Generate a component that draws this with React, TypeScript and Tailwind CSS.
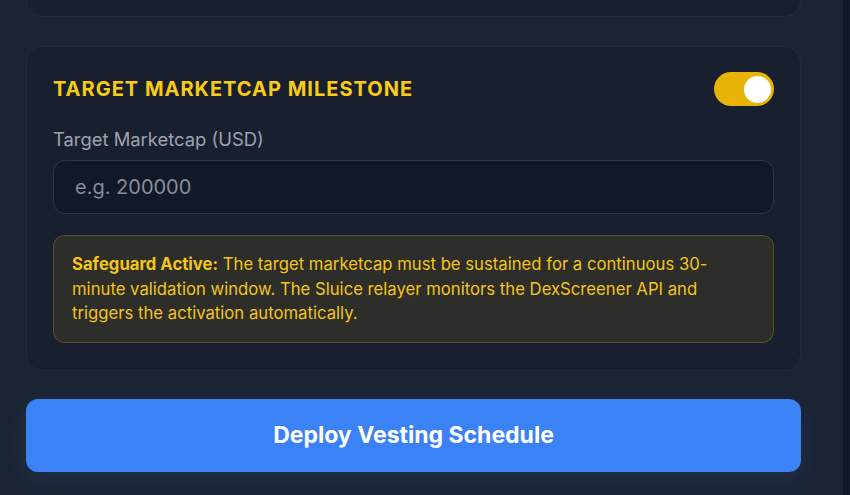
import { useState } from 'react';

export default function App() {
  const [enabled, setEnabled] = useState(true);

  return (
    <div
      className="flex h-[495px] w-[850px] overflow-hidden bg-[#111827]"
      style={{ fontFamily: 'Inter, "Noto Sans", sans-serif' }}
    >
      <div className="flex w-[843px] flex-col bg-[#1c2433] pl-[26px] pr-[42px]">
        {/* Previous card, scrolled mostly out of view */}
        <div className="h-[17px] rounded-b-[16px] border-x border-b border-[#222b3b] bg-[#181f2e]" />

        {/* Target marketcap card */}
        <div className="mt-[29px] rounded-[16px] border border-[#222b3b] bg-[#181f2e] px-[26px] pb-[27px] pt-[25px]">
          <div className="flex items-center justify-between">
            <h2 className="text-[20px] font-bold tracking-[0.05em] text-[#facc15]">
              TARGET MARKETCAP MILESTONE
            </h2>
            <button
              type="button"
              onClick={() => setEnabled(!enabled)}
              className={`flex h-[34px] w-[60px] items-center rounded-full px-[3px] ${
                enabled ? 'justify-end bg-[#eab308]' : 'justify-start bg-[#374151]'
              }`}
            >
              <span className="h-[27px] w-[27px] rounded-full bg-white" />
            </button>
          </div>

          <label className="mt-[21px] block text-[18.4px] leading-6 text-[#9ca3af]">
            Target Marketcap (USD)
          </label>
          <input
            type="text"
            placeholder="e.g. 200000"
            className="mt-[9px] block h-[54px] w-full rounded-[12px] border border-[#2d3748] bg-[#111827] px-[21px] text-[20px] text-white placeholder:text-[#878e9a] outline-none"
          />

          <div className="mt-[21px] rounded-[12px] border border-[#eab308]/25 bg-[#eab308]/10 px-[18px] py-[16px] text-[16.7px] leading-[24.5px] text-[#f5c518]">
            <span className="font-bold">Safeguard Active:</span> The target marketcap must be
            sustained for a continuous 30-minute validation window. The Sluice relayer monitors
            the DexScreener API and triggers the activation automatically.
          </div>
        </div>

        {/* Deploy button */}
        <button
          type="button"
          className="mt-[28px] h-[73px] w-full shrink-0 rounded-[12px] bg-[#3b82f6] text-[23px] font-bold text-white shadow-[0_8px_24px_rgba(59,130,246,0.12)]"
        >
          Deploy Vesting Schedule
        </button>
      </div>
    </div>
  );
}
